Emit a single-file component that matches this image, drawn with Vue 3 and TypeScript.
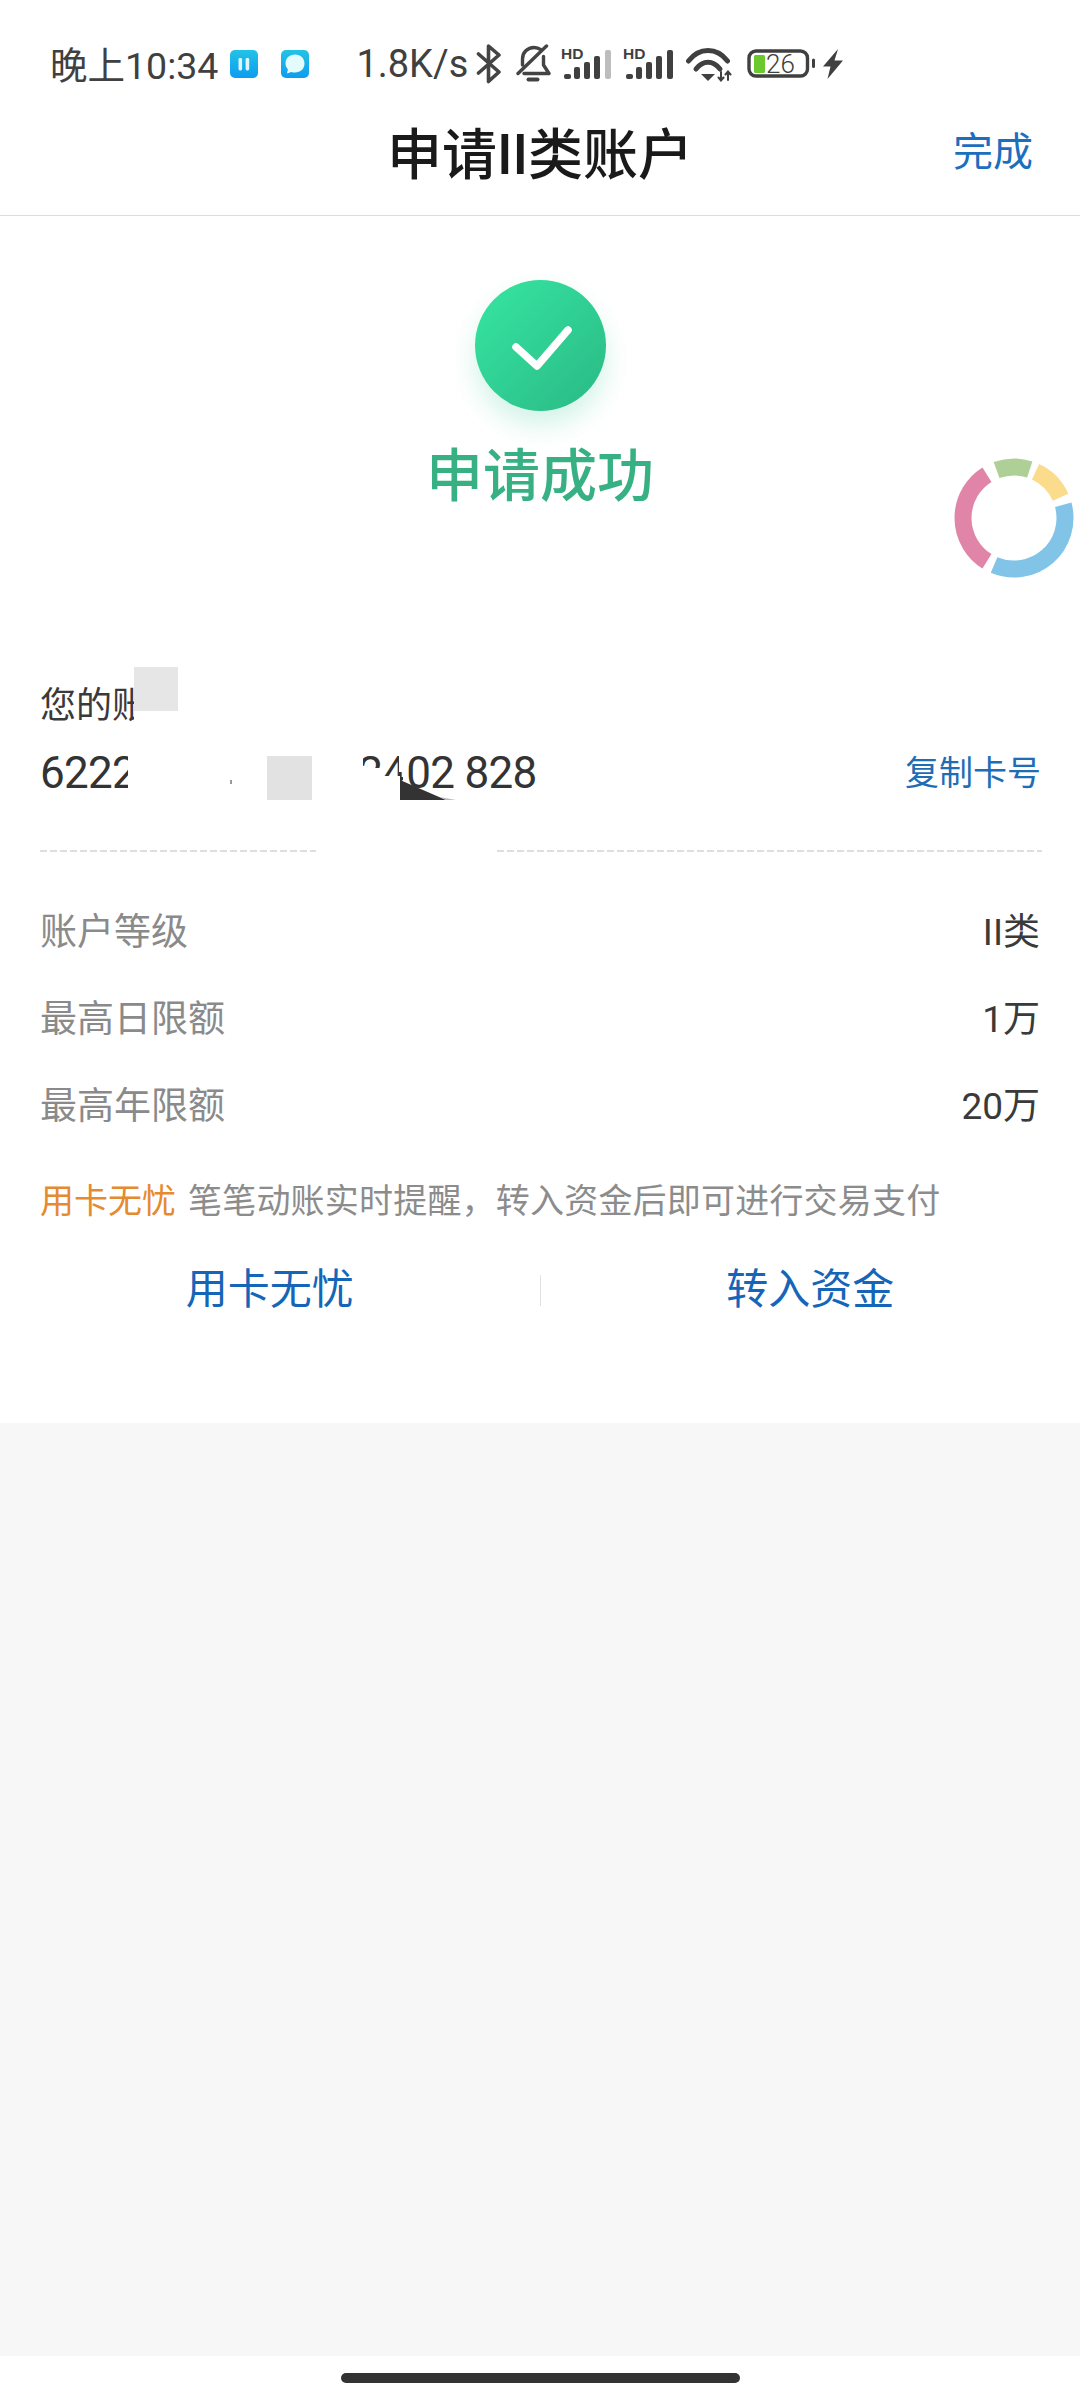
<template>
  <div class="page">
    <!-- status bar -->
    <div class="status">
      <span class="time">晚上10:34</span>
      <svg class="tile tile-a" width="28" height="28" viewBox="0 0 28 28">
        <defs>
          <linearGradient id="tileBg" x1="0" y1="0" x2="0" y2="1">
            <stop offset="0" stop-color="#22c3e6" />
            <stop offset="1" stop-color="#0e9cf0" />
          </linearGradient>
        </defs>
        <rect width="28" height="28" rx="5" fill="url(#tileBg)" />
        <rect x="8.5" y="8" width="3.6" height="12.5" rx="1.4" fill="#dff6fd" />
        <rect x="15.6" y="8" width="3.6" height="12.5" rx="1.4" fill="#dff6fd" />
      </svg>
      <svg class="tile tile-b" width="28" height="28" viewBox="0 0 28 28">
        <rect width="28" height="28" rx="5" fill="url(#tileBg)" />
        <path d="M14 4.5c5.6 0 9.5 3.8 9.5 9s-3.9 9-9.5 9c-1.3 0-2.5-.2-3.6-.6L6 23.5l.9-4.2c-1.5-1.5-2.4-3.5-2.4-5.8 0-5.2 3.9-9 9.5-9z" fill="#e4fbfb" />
      </svg>
      <span class="speed">1.8K/s</span>
      <svg class="bt" width="26" height="40" viewBox="0 0 26 40" fill="none" stroke="#444" stroke-width="3.6" stroke-linecap="round" stroke-linejoin="round">
        <path d="M2.5 10 23 28 12.5 37.5V2L23 11 2.5 29" />
      </svg>
      <svg class="bell" width="36" height="40" viewBox="0 0 36 40" fill="none" stroke="#444" stroke-width="3.4" stroke-linecap="round" stroke-linejoin="round">
        <path d="M7.5 21v-6C7.5 8.500 12.500 3.500 19 3.500c2.500 0 5 .8 6.800 2.200" />
        <path d="M28.500 12.500V21l5.500 8.500H9" />
        <path d="M3 29.500 31.500 2" />
        <path d="M13.500 35.500h9" stroke-width="4" />
      </svg>
      <svg v-for="s in signals" :key="s.id" class="signal" :class="s.id" width="50" height="40" viewBox="0 -4 50 40">
        <text x="0" y="11" class="hd">HD</text>
        <rect
          v-for="(b, i) in bars"
          :key="i"
          :x="b.x"
          :y="b.y"
          :width="b.w"
          :height="31 - b.y"
          rx="2"
          :fill="i === 4 ? s.last : '#404040'"
        />
      </svg>
      <svg class="wifi" width="46" height="36" viewBox="0 0 46 36" fill="none" stroke="#404040" stroke-linecap="round">
        <path d="M2.500 15C13 1 31 1 41.500 15" stroke-width="5" />
        <path d="M10 23C17 14 27 14 34 23" stroke-width="5" />
        <path d="M15 28h14L22 35z" fill="#404040" stroke="none" />
        <path d="M35 26v8m-2.500-2.500L35 34.500l2.500-3M42 34v-8m-2.500 2.500L42 25.500l2.500 3" stroke-width="2" />
      </svg>
      <svg class="batt" width="70" height="30" viewBox="0 0 70 30">
        <rect x="2" y="2" width="58.500" height="25" rx="7" fill="none" stroke="#404040" stroke-width="3.400" />
        <rect x="7" y="6" width="11" height="18" rx="1.500" fill="#6bc82e" />
        <text x="19" y="24" class="batt-num">26</text>
        <rect x="65" y="9.500" width="3" height="9.500" rx="1.500" fill="#404040" />
      </svg>
      <svg class="bolt" width="20" height="30" viewBox="0 0 20 30">
        <path d="M15 0 0 17.500h7.500L4.500 30 20 11.500h-8.500z" fill="#404040" />
      </svg>
    </div>

    <!-- nav -->
    <div class="nav">
      <h1 class="nav-title">申请II类账户</h1>
      <span class="nav-done">完成</span>
    </div>

    <div class="card">
      <div class="ok-circle">
        <svg width="131" height="131" viewBox="0 0 131 131" fill="none" stroke="#fff" stroke-width="7.500" stroke-linecap="round" stroke-linejoin="round">
          <path d="M41 67 62 86 93 50" />
        </svg>
      </div>
      <div class="ok-text">申请成功</div>

      <div class="account">
        <div class="label">您的账户</div>
        <div class="number-row">
          <span class="num-head">6222</span>
          <span class="num-tail">2402 828</span>
          <span class="copy">复制卡号</span>
        </div>
        <!-- 打码区域 -->
        <svg class="redact" width="1080" height="160" viewBox="0 655 1080 160">
          <rect x="134" y="675" width="60" height="50" fill="#fff" />
          <rect x="134" y="667" width="44" height="44" fill="#e6e6e6" />
          <rect x="128" y="750" width="24" height="50" fill="#fff" />
          <rect x="267" y="756" width="45" height="44" fill="#e2e2e2" />
          <rect x="230" y="780" width="2" height="4" fill="#999" />
          <polygon points="345,750 363,750 363,768 384,768 384,776 400,776 400,805 345,805" fill="#fff" />
          <polygon points="399,750 407,750 407,782 403,782 403,772 399,772" fill="#fff" />
          <polygon points="400,780 446,800 400,800" fill="#333" />
          <polygon points="446,800 456,800 440,797" fill="#bbb" />
        </svg>
      </div>

      <div class="dash-line">
        <div class="dash dash-left"></div>
        <div class="dash dash-right"></div>
      </div>

      <div class="rows">
        <div v-for="r in rows" :key="r.label" class="row">
          <span class="row-label">{{ r.label }}</span>
          <span class="row-value">{{ r.value }}</span>
        </div>
      </div>

      <div class="hint">
        <span class="hint-tag">用卡无忧</span>
        <span class="hint-text">笔笔动账实时提醒，转入资金后即可进行交易支付</span>
      </div>

      <div class="actions">
        <span class="action">用卡无忧</span>
        <span class="action-sep"></span>
        <span class="action">转入资金</span>
      </div>
    </div>

    <div class="gray"></div>
    <div class="home">
      <div class="home-bar"></div>
    </div>

    <!-- 悬浮球 -->
    <svg class="ring" width="122" height="122" viewBox="-1 -1 122 122" fill="none" stroke-width="17">
      <path v-for="a in arcs" :key="a.color" :d="arcPath(a.from, a.to)" :stroke="a.color" />
    </svg>
  </div>
</template>

<script setup lang="ts">
const signals = [
  { id: 'sig-a', last: '#bdbdbd' },
  { id: 'sig-b', last: '#404040' }
]

const bars = [
  { x: 3, y: 26, w: 7 },
  { x: 13, y: 19, w: 6 },
  { x: 23, y: 14, w: 6 },
  { x: 33, y: 8, w: 6 },
  { x: 44, y: 2, w: 6 }
]

const rows = [
  { label: '账户等级', value: 'II类' },
  { label: '最高日限额', value: '1万' },
  { label: '最高年限额', value: '20万' }
]

const arcs = [
  { from: -20, to: 18, color: '#aecf96' },
  { from: 25, to: 66, color: '#fbdc8c' },
  { from: 75, to: 203, color: '#82c3e8' },
  { from: 212, to: 328, color: '#e085a8' }
]

// 角度从正上方顺时针算
const arcPath = (from: number, to: number) => {
  const r = 51
  const pt = (deg: number) => {
    const rad = (deg * Math.PI) / 180
    return `${(60 + r * Math.sin(rad)).toFixed(2)} ${(60 - r * Math.cos(rad)).toFixed(2)}`
  }
  const large = to - from > 180 ? 1 : 0
  return `M${pt(from)}A${r} ${r} 0 ${large} 1 ${pt(to)}`
}
</script>

<style>
html,
body {
  margin: 0;
  background: #fff;
}
</style>

<style scoped>
.page {
  position: relative;
  width: 1080px;
  height: 2400px;
  display: flex;
  flex-direction: column;
  background: #fff;
  font-family: Roboto, "Noto Sans CJK SC", sans-serif;
  overflow: hidden;
}

.status {
  height: 95px;
  box-sizing: border-box;
  padding: 32px 0 0 50px;
  display: flex;
  align-items: center;
  color: #404040;
  flex-shrink: 0;
}

.time,
.speed {
  white-space: nowrap;
}

.time {
  font-size: 37.500px;
  margin-top: -2px;
}

.tile-a {
  margin-left: 12px;
}

.tile-b {
  margin-left: 23px;
}

.speed {
  margin-left: 47px;
  font-size: 38px;
  margin-top: 1px;
}

.bt {
  margin-left: 8px;
}

.bell {
  margin-left: 13px;
}

.signal {
  margin-left: 12px;
}

.sig-a {
  margin-left: 10px;
}

.hd {
  font-family: "Liberation Sans", sans-serif;
  font-size: 15.500px;
  font-weight: 700;
  fill: #404040;
}

.wifi {
  margin-left: 13px;
}

.batt {
  margin-left: 15px;
}

.batt-num {
  font-family: Roboto, sans-serif;
  font-size: 26px;
  font-weight: 300;
  fill: #404040;
}

.bolt {
  margin-left: 6px;
}

.nav {
  position: relative;
  height: 121px;
  box-sizing: border-box;
  border-bottom: 1px solid #dcdcdc;
  display: flex;
  align-items: center;
  justify-content: center;
  flex-shrink: 0;
}

.nav-title {
  margin: 0;
  font-size: 55px;
  font-weight: 500;
  line-height: 60px;
  color: #1a1a1a;
}

.nav-done {
  position: absolute;
  right: 47px;
  top: 36px;
  font-size: 40px;
  line-height: 44px;
  color: #1b6fbe;
}

.card {
  display: flex;
  flex-direction: column;
  align-items: center;
  padding: 64px 0 103px;
  background: #fff;
  flex-shrink: 0;
}

.ok-circle {
  width: 131px;
  height: 131px;
  border-radius: 50%;
  background: linear-gradient(135deg, #36e6a2, #2ab985);
  box-shadow: 0 14px 26px rgba(50, 200, 150, 0.22);
}

.ok-text {
  margin-top: 38px;
  font-size: 57px;
  line-height: 56px;
  font-weight: 500;
  color: #37b083;
}

.account {
  position: relative;
  align-self: stretch;
  margin-top: 183px;
  padding: 0 40px;
}

.label {
  height: 36px;
  white-space: nowrap;
  font-size: 36px;
  line-height: 36px;
  color: #3a3a3a;
}

.number-row {
  margin-top: 27px;
  height: 44px;
  display: flex;
  align-items: center;
}

.num-head,
.num-tail {
  font-size: 44px;
  line-height: 44px;
  letter-spacing: -0.7px;
  color: #333;
  white-space: nowrap;
}

.num-tail {
  margin-left: 222px;
}

.copy {
  margin-left: auto;
  margin-right: -1px;
  font-size: 34px;
  line-height: 44px;
  color: #1e6db5;
}

.redact {
  position: absolute;
  left: 0;
  top: -33px;
}

.dash-line {
  align-self: stretch;
  margin-top: 55px;
  padding: 0 38px 0 40px;
  display: flex;
}

.dash {
  height: 2px;
  background: repeating-linear-gradient(90deg, #dedede 0 7px, transparent 7px 10px);
}

.dash-left {
  width: 276px;
}

.dash-right {
  flex: 1;
  margin-left: 181px;
}

.rows {
  align-self: stretch;
  margin-top: 33px;
  padding: 0 40px;
}

.row {
  height: 87px;
  display: flex;
  align-items: center;
  justify-content: space-between;
  font-size: 37px;
}

.row-label {
  color: #8a8a8a;
}

.row-value {
  color: #3a3a3a;
}

.hint {
  align-self: stretch;
  margin-top: 38px;
  padding: 0 40px;
  display: flex;
  gap: 12px;
  font-size: 34px;
  line-height: 34px;
}

.hint-tag {
  color: #e58a2e;
}

.hint-text {
  color: #8c8c8c;
  letter-spacing: 0.2px;
}

.actions {
  align-self: stretch;
  margin-top: 42px;
  height: 60px;
  display: flex;
  align-items: center;
}

.action {
  flex: 1;
  text-align: center;
  font-size: 42px;
  line-height: 60px;
  color: #1565b8;
}

.action-sep {
  width: 1px;
  height: 31px;
  background: #e2e2e2;
}

.gray {
  flex: 1;
  background: #f7f7f7;
}

.home {
  height: 44px;
  box-sizing: border-box;
  padding-top: 17px;
  display: flex;
  justify-content: center;
  flex-shrink: 0;
  background: #fff;
}

.home-bar {
  width: 399px;
  height: 10px;
  border-radius: 5px;
  background: #333;
}

.ring {
  position: absolute;
  left: 953px;
  top: 457px;
}
</style>
